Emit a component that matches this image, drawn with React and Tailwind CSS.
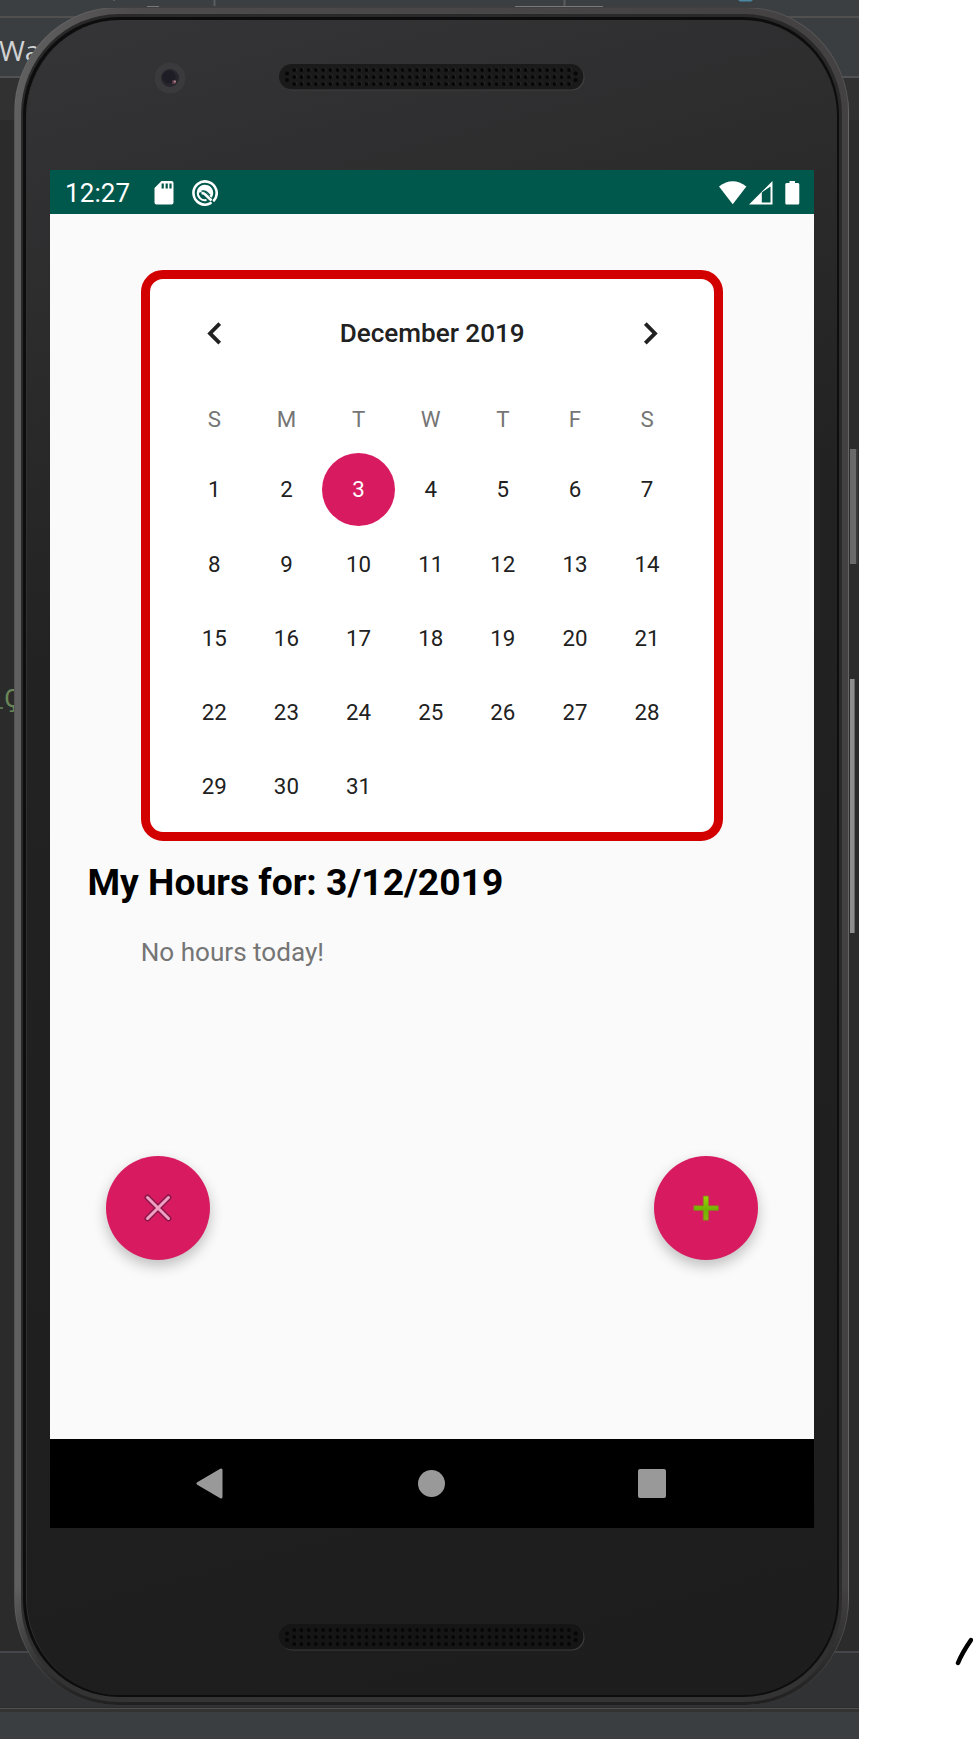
import React from "react";

const weekdays = ["S", "M", "T", "W", "T", "F", "S"];
const days = Array.from({ length: 31 }, (_, i) => i + 1);
const holes = Array.from({ length: 39 }, (_, i) => 15.3 + i * 7.23);

function Backdrop() {
  return (
    <div className="col-start-1 row-start-1 flex h-[1739px] flex-col overflow-hidden bg-[#2b2b2b]">
      <div className="h-4 bg-[#3b3f42]">
        <svg width="859" height="16" className="block">
          <path d="M114 0v1M214.500 0v6M564.500 0v6" stroke="#5b5d5f" strokeWidth="2" />
          <path d="M147 6.500h12M515 6.500h88" stroke="#77797b" />
          <path d="M738 0h15l-2 1.500h-11z" fill="#4a88a2" />
        </svg>
      </div>
      <div className="h-0.5 bg-[#505050]" />
      <div className="h-[58px] bg-[#3b3e40] pt-2.5">
        <div className="-ml-px font-['Open_Sans',sans-serif] text-[28px] leading-[44px] text-[#d0d2d3]">Wal</div>
      </div>
      <div className="h-0.5 bg-[#505254]" />
      <div className="h-[42px] bg-[#313132]" />
      <div className="h-[1531px] bg-[#2b2b2b] pt-[559px]">
        <div className="flex items-center font-['DejaVu_Sans_Mono',monospace] text-[24px] leading-[40px] text-[#6a8759]">
          <svg className="mt-[17px]" width="4" height="2"><path d="M0 1h3" stroke="#6a8759" strokeWidth="1.500" /></svg>
          Ç
        </div>
      </div>
      <div className="h-0.5 bg-[#45474a]" />
      <div className="h-[54px] bg-[#313234]" />
      <div className="h-px bg-[#2c2c2c]" />
      <div className="h-px bg-[#515151]" />
      <div className="h-[3px] bg-[#333332]" />
      <div className="flex-1 bg-[#3b3e41]" />
    </div>
  );
}

function Speaker({ dim }) {
  return (
    <svg width="306" height="27" viewBox="0 0 306 27" className="block">
      <rect x="1" y="1" width="304.500" height="25.500" rx="12.700" fill={dim ? "#3c3c3c" : "#404041"} />
      <rect x="0" y="0" width="304.500" height="25.500" rx="12.700" fill={dim ? "#151515" : "#1a1a1a"} />
      {[6, 13, 20].map((y) =>
        holes.map((x) => (
          <g key={`${x}-${y}`}>
            <circle cx={x + 0.7} cy={y - 0.5} r="2" fill={dim ? "#1b1b1b" : "#2c2c2c"} />
            <circle cx={x} cy={y} r="1.900" fill="#070707" />
          </g>
        ))
      )}
      {[9.5, 16].map((y) => (
        <g key={y} fill="#070707">
          <circle cx="8" cy={y} r="2" />
          <circle cx="296.700" cy={y} r="2" />
        </g>
      ))}
    </svg>
  );
}

function StatusBar() {
  return (
    <div className="flex h-[44.300px] items-center bg-[#00574b] pt-px text-white">
      <span className="ml-[15px] w-[66px] text-[26px] leading-none tracking-[0.100px]">12:27</span>
      <svg className="ml-[23px]" width="20" height="24" viewBox="0 0 20 24">
        <path d="M7.500 0H17.500Q19.500 0 19.500 2V21.500Q19.500 23.500 17.500 23.500H2.500Q.5 23.500 .5 21.500V7Z" fill="#fff" />
        <path d="M8.700 2.500v5M12.700 2.500v5M16.500 2.500v5" stroke="#00574b" strokeWidth="2.200" />
      </svg>
      <svg className="ml-[18px]" width="26" height="26" viewBox="0 0 26 26" fill="none">
        <path d="M22 20.400A11.600 11.600 0 1 0 18.600 23.200" stroke="#fff" strokeWidth="2.600" strokeLinecap="round" />
        <path d="M18.800 17.200A7.200 7.200 0 1 0 14.500 20" stroke="#fff" strokeWidth="2" />
        <path d="M6.500 10.500Q9 5.500 14 6Q19.500 7 20.200 12.500L18.800 17L14.500 12.500Q13 11 11 11.300L6.500 13Z" fill="#fff" />
        <path d="M9.500 13.500Q11.500 12.800 13 14.300L19.500 20.500" stroke="#fff" strokeWidth="2.600" />
        <path d="M9.500 11.200Q13 10 15.500 12.700L18 15.300" stroke="#00574b" strokeWidth="1.300" />
      </svg>
      <div className="ml-auto mr-[14.500px] flex items-center">
        <svg width="28" height="24" viewBox="0 0 28 24">
          <path d="M0 5.500Q13.700-5 27.400 5.500L13.700 23.300Z" fill="#fff" />
        </svg>
        <svg className="ml-0.5" width="24" height="24" viewBox="0 0 24 24">
          <path fillRule="evenodd" d="M0 23.500L23.500 0V23.500ZM12.800 11.500V21.500H21.500V5.500Z" fill="#fff" />
        </svg>
        <svg className="ml-3" width="15" height="24" viewBox="0 0 15 24">
          <path d="M4.500 0h5.500v2H13Q14.300 2 14.300 3.500V22Q14.300 23.500 13 23.500H1.500Q.3 23.500 .3 22V3.500Q.3 2 1.500 2h3Z" fill="#fff" />
        </svg>
      </div>
    </div>
  );
}

function Calendar() {
  return (
    <div className="ml-[90.700px] h-[570.500px] w-[582.500px] rounded-[22px] border-[9.300px] border-[#d30000] bg-white text-[#212121]">
      <div className="flex h-[108px] items-center justify-between pl-[57px] pr-[56.500px]">
        <svg className="mt-px" width="15" height="23" viewBox="0 0 15 23" fill="none" stroke="#212121" strokeWidth="3.800">
          <path d="M12.700 1.700L3 11.400L12.700 21.100" />
        </svg>
        <span className="text-[26.100px] font-medium leading-none">December 2019</span>
        <svg className="mt-px" width="15" height="23" viewBox="0 0 15 23" fill="none" stroke="#212121" strokeWidth="3.800">
          <path d="M2.300 1.700L12 11.400L2.300 21.100" />
        </svg>
      </div>
      <div className="ml-[28.500px] mt-px grid h-[62px] w-[505px] grid-cols-7 place-items-center text-[22.300px] leading-none text-[#757575]">
        {weekdays.map((d, i) => (
          <span key={i}>{d}</span>
        ))}
      </div>
      <div className="ml-[28.500px] mt-[2px] grid w-[505px] auto-rows-[74.300px] grid-cols-7 text-[22.300px] leading-none">
        {days.map((d) => (
          <span key={d} className="flex items-center justify-center">
            {d === 3 ? (
              <span className="flex size-[73.600px] shrink-0 items-center justify-center rounded-full bg-[#d81b60] text-white">3</span>
            ) : (
              d
            )}
          </span>
        ))}
      </div>
    </div>
  );
}

function Fab({ children }) {
  return (
    <button className="flex size-[104px] items-center justify-center rounded-full bg-[#d81b60] shadow-[0_6px_14px_rgba(0,0,0,0.24)]">
      {children}
    </button>
  );
}

function NavBar() {
  return (
    <div className="flex h-[89px] items-center bg-black">
      <svg className="ml-[146px]" width="27" height="31" viewBox="0 0 27 31">
        <path d="M2 15.500L25 2V29Z" fill="#999" stroke="#999" strokeWidth="3" strokeLinejoin="round" />
      </svg>
      <span className="ml-[195px] size-[27px] rounded-full bg-[#999]" />
      <span className="ml-[193px] h-[28.500px] w-[27.700px] rounded-[2px] bg-[#999]" />
    </div>
  );
}

function Screen() {
  return (
    <div className="ml-[23px] h-[1358px] w-[764px] bg-[#fafafa]">
      <StatusBar />
      <div className="h-[1224.700px] pt-[56px]">
        <Calendar />
        <h1 className="ml-[37.500px] mt-[19px] text-[37.250px] font-bold leading-[44px] text-black">My Hours for: 3/12/2019</h1>
        <p className="ml-[90.700px] mt-[33px] text-[26.100px] leading-[30px] text-[#757575]">No hours today!</p>
        <div className="mx-[56px] mt-[189.500px] flex justify-between">
          <Fab>
            <svg width="28" height="28" viewBox="0 0 28 28" strokeLinecap="round">
              <path d="M3.500 3.500L24.500 24.500M24.500 3.500L3.500 24.500" stroke="#8a1749" strokeWidth="6" />
              <path d="M3.500 3.500L24.500 24.500M24.500 3.500L3.500 24.500" stroke="#f0a0c3" strokeWidth="3" />
            </svg>
          </Fab>
          <Fab>
            <svg width="26" height="26" viewBox="0 0 26 26">
              <defs>
                <linearGradient id="plus" x1="0" y1="0" x2="0" y2="1">
                  <stop offset="0" stopColor="#9bd400" />
                  <stop offset="0.550" stopColor="#70b400" />
                  <stop offset="1" stopColor="#8bb40c" />
                </linearGradient>
              </defs>
              <path d="M10.200 1h5.400v9.700h9.800v4.800h-9.800v9.700h-5.400v-9.700H.8v-4.800h9.400Z" fill="url(#plus)" stroke="#93712a" strokeWidth="0.800" />
            </svg>
          </Fab>
        </div>
      </div>
      <NavBar />
    </div>
  );
}

function Phone() {
  return (
    <div className="relative col-start-1 row-start-1 ml-[14px] mt-[7px] h-[1698px] w-[835px] rounded-[104px/106px] border border-b-0 border-[#70707066] bg-[linear-gradient(to_bottom,transparent_93%,#202020_100%),linear-gradient(to_right,#616061,#4d4b4c_15%,#434142)] pb-[3px] pl-[6px] pr-[6px] pt-[6px]">
      <div className="h-full w-full rounded-[98px/100px] bg-[linear-gradient(to_bottom,#2a2929_90%,#343434_100%)] pb-[5px] pl-[2px] pr-[3px] pt-[3px]">
        <div className="h-full rounded-[96px/98px] bg-[#0e0d0e] pb-0.5 pl-[3px] pr-[2px] pt-[3px]">
          <div className="h-full rounded-[94px/96px] border-l border-[#303031] bg-linear-[165deg] from-[#353537] from-0% via-[#222222] via-35% to-[#1d1d1e] to-100%">
            <div className="flex h-[150px] items-start">
              <svg className="ml-[127px] mt-[41.500px]" width="32" height="32" viewBox="0 0 32 32">
                <circle cx="16" cy="16" r="15.500" fill="#3a393b" />
                <circle cx="16" cy="16" r="9" fill="#27262c" />
                <circle cx="15" cy="15" r="6.500" fill="#1e1d26" />
                <circle cx="20" cy="20" r="2" fill="#6b4553" />
                <circle cx="21" cy="19.500" r="0.900" fill="#b89099" />
              </svg>
              <div className="ml-[93px] mt-[44px]">
                <Speaker />
              </div>
            </div>
            <Screen />
            <div className="ml-[252px] mt-[96px]">
              <Speaker dim />
            </div>
          </div>
        </div>
      </div>
      <span className="absolute left-[835px] top-[441px] h-[115px] w-[8px] border-r-2 border-[#3a3a3a] bg-[#6a6a6a]" />
      <span className="absolute left-[835px] top-[671px] h-[254px] w-[5px] border-r border-[#666] bg-[#8e8e8e]" />
    </div>
  );
}

export default function App() {
  return (
    <div className="flex h-[1739px] w-[973px] overflow-hidden bg-white font-['Roboto',sans-serif]">
      <div className="grid w-[859px] shrink-0 overflow-hidden">
        <Backdrop />
        <Phone />
      </div>
      <div className="flex flex-1 items-end justify-end pb-[71px]">
        <svg width="20" height="32" viewBox="0 0 20 32" fill="none">
          <path d="M5 27Q9 17 18 4" stroke="#000" strokeWidth="4.500" strokeLinecap="round" />
        </svg>
      </div>
    </div>
  );
}
